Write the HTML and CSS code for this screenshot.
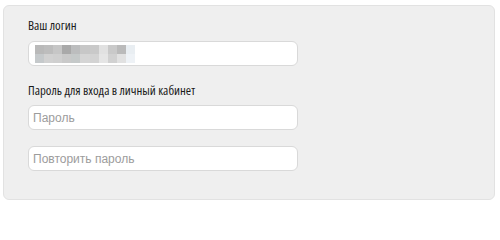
FILE: index.html
```html
<!DOCTYPE html>
<html lang="ru">
<head>
<meta charset="utf-8">
<link rel="stylesheet" href="styles.css">
</head>
<body>
<div class="panel">
  <label class="label label-login">Ваш логин</label>
  <div class="field field-login">
    <div class="mosaic">
      <div class="row">
        <span class="c1"></span><span class="c2"></span><span class="c3"></span><span class="c4"></span><span class="c5"></span><span class="c6"></span><span class="c7"></span><span class="c8"></span><span class="c9"></span><span class="c10"></span><span class="c11"></span>
      </div>
      <div class="row">
        <span class="d1"></span><span class="d2"></span><span class="d3"></span><span class="d4"></span><span class="d5"></span><span class="d6"></span><span class="d7"></span><span class="d8"></span><span class="d9"></span><span class="d10"></span><span class="d11"></span>
      </div>
    </div>
  </div>
  <label class="label label-pass">Пароль для входа в личный кабинет</label>
  <input class="field field-pass" type="password" placeholder="Пароль">
  <input class="field field-repeat" type="password" placeholder="Повторить пароль">
</div>
</body>
</html>
```

FILE: styles.css
```css
html, body {
  margin: 0;
  padding: 0;
  background: #ffffff;
}
body {
  padding: 5px 5px 0 3px;
  font-family: "Liberation Sans", Arial, sans-serif;
}
.panel {
  box-sizing: border-box;
  width: 492px;
  height: 195px;
  background: #efefef;
  border: 1px solid #e2e2e2;
  border-radius: 6px;
  padding: 12px 0 0 24px;
  display: flex;
  flex-direction: column;
  align-items: flex-start;
}
.label {
  font-family: "Open Sans", sans-serif;
  font-stretch: 75%;
  font-size: 12.8px;
  line-height: 14px;
  color: #1a1a1a;
  display: block;
}
.field {
  box-sizing: border-box;
  width: 270px;
  height: 25px;
  margin: 0;
  padding: 0 4px;
  background: #ffffff;
  border: 1px solid #d9d9d9;
  border-radius: 6px;
  font-family: "Liberation Sans", Arial, sans-serif;
  font-size: 12px;
  color: #333;
  outline: none;
  display: block;
}
.field::placeholder {
  color: #9c9c9c;
}
.field-login {
  margin-top: 9px;
  padding-left: 6px;
  display: flex;
  align-items: center;
}
.label-pass {
  margin-top: 17px;
}
.field-pass {
  margin-top: 8px;
}
.field-repeat {
  margin-top: 16px;
}
.mosaic {
  display: flex;
  flex-direction: column;
}
.row {
  display: flex;
}
.row span {
  display: block;
  width: 9.1px;
  height: 9px;
}
.c1 { background: #b9b9b9; }
.c2 { background: #bdbdbd; }
.c3 { background: #c6c6c6; }
.c4 { background: #a9a9a9; }
.c5 { background: #bcbdbe; }
.c6 { background: #c7c7c7; }
.c7 { background: #c9c9c9; }
.c8 { background: #e1e1e1; }
.c9 { background: #c9c9c9; }
.c10 { background: #bababa; }
.c11 { background: #e9eef2; }
.d1 { background: #c5c9cb; }
.d2 { background: #d1d1d1; }
.d3 { background: #cfcfcf; }
.d4 { background: #c9c9c9; }
.d5 { background: #c5c9c9; }
.d6 { background: #d5d5d5; }
.d7 { background: #d3d3d3; }
.d8 { background: #e5e5e5; }
.d9 { background: #d1d1d1; }
.d10 { background: #e1e1e1; }
.d11 { background: #eef2f6; }
```
